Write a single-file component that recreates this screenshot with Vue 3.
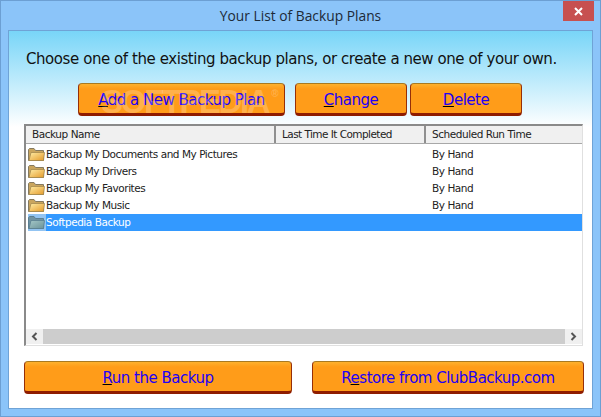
<template>
  <div class="window">
    <div class="titlebar">
      <span class="title">Your List of Backup Plans</span>
      <button class="close-btn">
        <svg width="9" height="9" viewBox="0 0 9 9"><path d="M1 1L8 8M8 1L1 8" stroke="#fff" stroke-width="2" /></svg>
      </button>
    </div>
    <div class="content">
      <p class="intro">Choose one of the existing backup plans, or create a new one of your own.</p>
      <div class="top-actions">
        <button class="action add"><u>A</u>dd a New Backup Plan</button>
        <button class="action change"><u>C</u>hange</button>
        <button class="action delete"><u>D</u>elete</button>
      </div>
      <div class="list">
        <div class="list-head">
          <div class="col col-name">Backup Name</div>
          <div class="col col-last">Last Time It Completed</div>
          <div class="col col-sched">Scheduled Run Time</div>
        </div>
        <div class="list-body">
          <div v-for="plan in plans" :key="plan.name" class="row" :class="{ selected: plan.selected }">
            <span class="folder-cell">
              <svg width="17" height="13" viewBox="0 0 17 13">
                <defs>
                  <linearGradient id="fy" x1="0" y1="0" x2="1" y2="1">
                    <stop offset="0" stop-color="#ffeda6" />
                    <stop offset="1" stop-color="#e49a2a" />
                  </linearGradient>
                  <linearGradient id="fb" x1="0" y1="0" x2="1" y2="1">
                    <stop offset="0" stop-color="#a5c8c8" />
                    <stop offset="1" stop-color="#6a9298" />
                  </linearGradient>
                </defs>
                <path d="M0.5 12.5V1.5L1.5 0.5H6L7.5 2.5H15.5V12.5Z" :fill="plan.selected ? '#6f93a3' : '#c9a55e'" :stroke="plan.selected ? '#5b7f92' : '#857a60'" />
                <path d="M1 12.5L3 4.5H16.5L15.5 12.5Z" :fill="plan.selected ? 'url(#fb)' : 'url(#fy)'" :stroke="plan.selected ? '#5b8090' : '#a68a4e'" stroke-width="0.8" />
              </svg>
            </span>
            <span class="row-text">
              <span class="cell-name">{{ plan.name }}</span>
              <span class="cell-last"></span>
              <span class="cell-sched">{{ plan.schedule }}</span>
            </span>
          </div>
        </div>
        <div class="hscroll">
          <span class="arrow">
            <svg width="7" height="9" viewBox="0 0 7 9"><path d="M5.5 1L2 4.5L5.5 8" fill="none" stroke="#555" stroke-width="2" /></svg>
          </span>
          <span class="thumb"></span>
          <span class="arrow">
            <svg width="7" height="9" viewBox="0 0 7 9"><path d="M1.5 1L5 4.5L1.5 8" fill="none" stroke="#555" stroke-width="2" /></svg>
          </span>
        </div>
      </div>
      <div class="bottom-actions">
        <button class="action run"><u>R</u>un the Backup</button>
        <button class="action restore">R<u>e</u>store from ClubBackup.com</button>
      </div>
      <span class="watermark">SOFTPEDIA<sup class="reg">®</sup></span>
    </div>
  </div>
</template>

<script setup>
const plans = [
  { name: 'Backup My Documents and My Pictures', schedule: 'By Hand' },
  { name: 'Backup My Drivers', schedule: 'By Hand' },
  { name: 'Backup My Favorites', schedule: 'By Hand' },
  { name: 'Backup My Music', schedule: 'By Hand' },
  { name: 'Softpedia Backup', schedule: '', selected: true }
]
</script>

<style>
html, body {
  margin: 0;
  padding: 0;
}
</style>

<style scoped>
.window {
  width: 601px;
  height: 417px;
  box-sizing: border-box;
  background: #8bc4f9;
  border: 1px solid #6c9fd3;
  display: flex;
  flex-direction: column;
  font-family: "DejaVu Sans", sans-serif;
}

.titlebar {
  height: 29px;
  flex: none;
  position: relative;
  display: flex;
  align-items: center;
  justify-content: center;
}

.title {
  font-family: "Open Sans", sans-serif;
  font-size: 13.8px;
  color: #1d2a38;
}

.close-btn {
  position: absolute;
  top: 0;
  right: 6px;
  width: 31px;
  height: 20px;
  padding: 0;
  border: none;
  background: #c75050;
  display: flex;
  align-items: center;
  justify-content: center;
}

.content {
  position: relative;
  margin: 0 7px 7px 7px;
  flex: 1;
  border: 1px solid #6fa3d6;
  background: linear-gradient(180deg, #78d5f8 0, #ffffff 96px);
  padding: 0 9px 0 15px;
  display: flex;
  flex-direction: column;
}

.intro {
  margin: 18px 0 0 2px;
  height: 20px;
  font-size: 15px;
  line-height: 20px;
  color: #111;
  letter-spacing: -0.43px;
  white-space: nowrap;
}

.top-actions {
  display: flex;
  margin: 14px 0 0 54px;
}

.action {
  font-family: "DejaVu Sans", sans-serif;
  color: #2200f5;
  font-size: 15px;
  letter-spacing: -0.5px;
  background: linear-gradient(180deg, #fdb12e 0, #ff9c19 5px, #ff9c19 100%);
  border: 1px solid #a87a22;
  border-bottom: 3px solid #8e1c00;
  border-left-color: #962f08;
  border-right-color: #962f08;
  border-radius: 4px;
  padding: 3px 0 0;
  box-sizing: border-box;
}

.action u {
  text-decoration-color: #000;
}

.add {
  width: 207px;
  height: 33px;
}

.change {
  width: 112px;
  height: 33px;
  margin-left: 10px;
}

.delete {
  width: 112px;
  height: 33px;
  margin-left: 3px;
}

.list {
  margin-top: 8px;
  width: 559px;
  height: 222px;
  box-sizing: border-box;
  border-top: 2px solid #8a8a8a;
  border-left: 2px solid #8a8a8a;
  border-right: 1px solid #e0e0e0;
  border-bottom: 1px solid #e0e0e0;
  background: #fff;
  display: flex;
  flex-direction: column;
  font-size: 10.5px;
  letter-spacing: -0.45px;
  color: #222;
}

.list-head {
  display: flex;
  height: 18px;
  flex: none;
  background: #f0f0f0;
  border-bottom: 1px solid #a8a8a8;
  box-sizing: border-box;
}

.col {
  line-height: 17px;
  padding-left: 6px;
  box-sizing: border-box;
  border-right: 2px solid #8f8f8f;
  white-space: nowrap;
}

.col-name {
  width: 250px;
}

.col-last {
  width: 150px;
  letter-spacing: -0.55px;
}

.col-sched {
  flex: 1;
  border-right: none;
}

.list-body {
  flex: 1;
  padding-top: 2px;
}

.row {
  display: flex;
  height: 17px;
  align-items: center;
}

.folder-cell {
  width: 18px;
  margin-left: 2px;
  height: 17px;
  display: flex;
  align-items: center;
  flex: none;
}

.row.selected .folder-cell {
  background: #93c4f2;
}

.row-text {
  flex: 1;
  display: flex;
  height: 17px;
  line-height: 17px;
}

.row.selected .row-text {
  background: #3399ff;
  color: #fff;
}

.cell-name {
  width: 237px;
  white-space: nowrap;
}

.cell-last {
  width: 149px;
}

.hscroll {
  height: 15px;
  flex: none;
  margin-bottom: 1px;
  display: flex;
  background: #f0f0f0;
}

.arrow {
  width: 17px;
  display: flex;
  align-items: center;
  justify-content: center;
  flex: none;
}

.thumb {
  flex: 1;
  background: #cdcdcd;
}

.bottom-actions {
  display: flex;
  justify-content: space-between;
  width: 560px;
  margin-top: 15px;
}

.run {
  width: 268px;
  height: 33px;
}

.restore {
  width: 272px;
  height: 33px;
}

.watermark {
  position: absolute;
  z-index: 2;
  left: 92px;
  top: 52px;
  font-family: "Liberation Sans", sans-serif;
  font-size: 33px;
  font-weight: bold;
  letter-spacing: -2.4px;
  color: rgba(255, 255, 255, 0.22);
  white-space: nowrap;
  pointer-events: none;
}

.reg {
  font-size: 10px;
  letter-spacing: 0;
  vertical-align: 16px;
  line-height: 0;
  margin-left: 3px;
}
</style>
